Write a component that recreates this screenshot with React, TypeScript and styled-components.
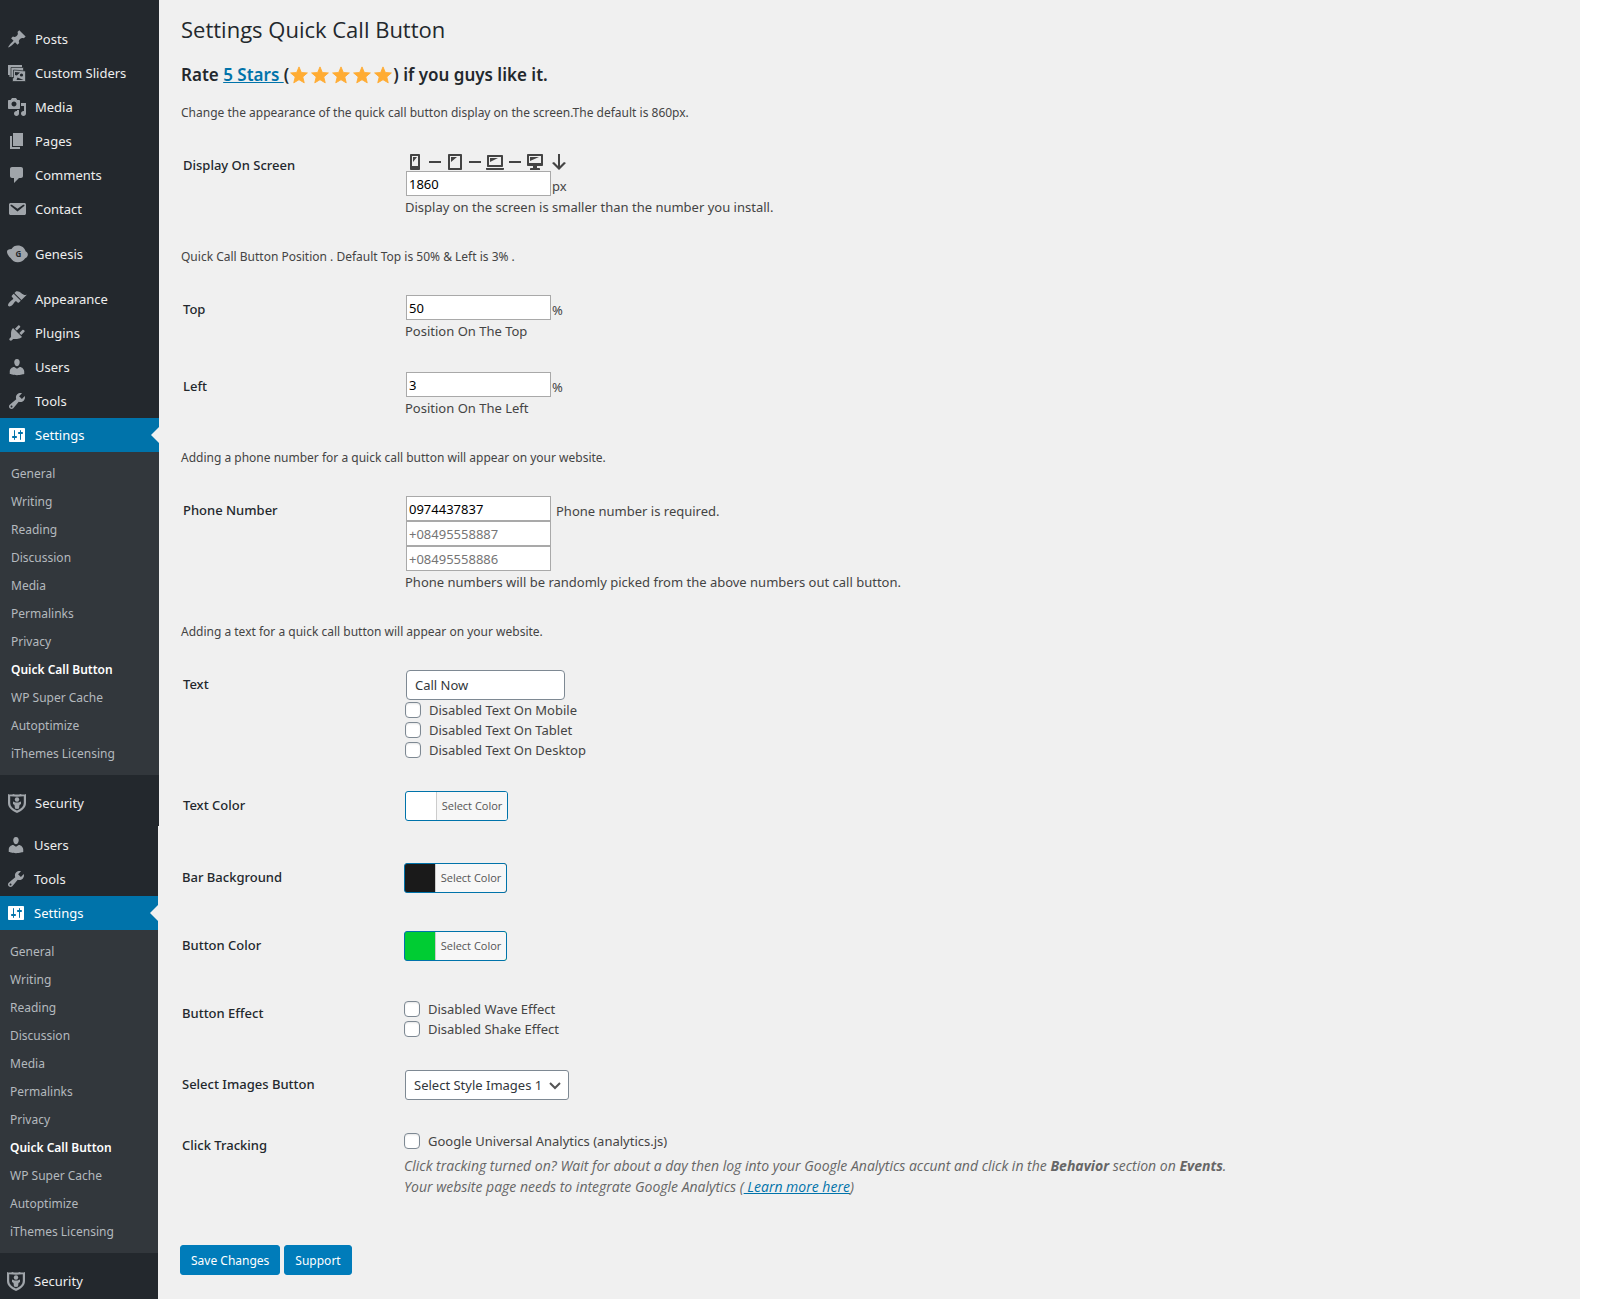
import React, { useState } from "react";
import styled, { createGlobalStyle, css } from "styled-components";

const color = {
  page: "#f0f0f0",
  menu: "#23282d",
  submenu: "#32373c",
  accent: "#0073aa",
  primary: "#007cba",
  heading: "#23282d",
  text: "#444444",
  muted: "#666666",
  border: "#7e8993",
  menuIcon: "#a0a5aa",
  menuText: "#eeeeee",
  submenuText: "#b4b9be",
};

const GlobalStyle = createGlobalStyle`
  *, *::before, *::after { box-sizing: border-box; }
  body {
    margin: 0;
    background: #ffffff;
    color: ${color.text};
    font-family: "Noto Sans", "Open Sans", sans-serif;
    font-size: 13px;
    line-height: 20px;
  }
  input, select, button { font-family: inherit; margin: 0; }
`;

const Page = styled.div`
  display: flex;
  margin: 0 20px 15px 0;
  background: ${color.page};
`;

const Sidebar = styled.aside`
  flex: 0 0 159px;
  overflow: hidden;
`;

const MenuBlock = styled.nav<{ $lower?: boolean }>`
  background: ${color.menu};
  padding: ${(p) => (p.$lower ? "2px 0 1px" : "22px 0 6px")};
  margin-left: ${(p) => (p.$lower ? "-1px" : "0")};
  width: 159px;
`;

const MenuList = styled.ul`
  list-style: none;
  margin: 0;
  padding: 0;
`;

const MenuItem = styled.li<{ $spaced?: boolean }>`
  margin-top: ${(p) => (p.$spaced ? "11px" : "0")};
`;

const MenuLink = styled.a<{ $active?: boolean }>`
  position: relative;
  display: flex;
  align-items: center;
  height: 34px;
  font-size: 13px;
  color: ${color.menuText};
  text-decoration: none;

  svg {
    flex: none;
    width: 20px;
    height: 20px;
    margin: 0 8px 0 7px;
    fill: ${color.menuIcon};
    overflow: visible;
  }

  ${(p) =>
    p.$active &&
    css`
      background: ${color.accent};
      color: #ffffff;
      svg { fill: #ffffff; }
      &::after {
        content: "";
        position: absolute;
        right: 0;
        top: 9px;
        border: 8px solid transparent;
        border-left-width: 0;
        border-right-color: ${color.page};
      }
    `}
`;

const Submenu = styled.ul`
  list-style: none;
  margin: 0;
  padding: 8px 0 7px;
  background: ${color.submenu};
`;

const SubmenuLink = styled.a<{ $current?: boolean }>`
  display: block;
  padding: 4px 11px;
  font-size: 12px;
  line-height: 20px;
  text-decoration: none;
  color: ${(p) => (p.$current ? "#ffffff" : color.submenuText)};
  font-weight: ${(p) => (p.$current ? 600 : 400)};
`;

const Main = styled.main`
  flex: 1;
  min-width: 0;
  padding: 14px 20px 24px 22px;
`;

const Title = styled.h1`
  margin: 0;
  font-family: "Open Sans", "Noto Sans", sans-serif;
  font-size: 22px;
  line-height: 30px;
  font-weight: 400;
  color: ${color.heading};
`;

const RateLine = styled.h2`
  display: flex;
  align-items: center;
  margin: 19px 0 16px;
  font-size: 17px;
  line-height: 24px;
  font-weight: 600;
  color: ${color.heading};
  white-space: pre;
`;

const Stars = styled.span`
  display: flex;
  gap: 3px;
  padding: 0 1px;
  svg { width: 18px; height: 18px; fill: #ffac33; }
`;

const Link = styled.a`
  color: ${color.accent};
  text-decoration: underline;
`;

const Intro = styled.p`
  margin: 29px 0 28px;
  font-size: 12px;
  line-height: 20px;

  ${RateLine} + & { margin-top: 0; }
`;

const Rows = styled.div<{ $wide?: boolean; $lower?: boolean }>`
  display: flex;
  flex-direction: column;
  gap: ${(p) => (p.$wide ? "31px" : "30px")};
  margin: ${(p) => (p.$lower ? "35px 0 0 -1px" : "0")};
`;

const Row = styled.div<{ $swatch?: boolean }>`
  display: grid;
  grid-template-columns: 222px minmax(0, 1fr);
  padding: 0 0 ${(p) => (p.$swatch ? "7px" : "0")} 2px;
`;

const rowLabel = css`
  padding-top: 4px;
  font-size: 13px;
  line-height: 20px;
  font-weight: 500;
  color: ${color.heading};
`;

const RowLabel = styled.label`
  ${rowLabel}
`;

const RowName = styled.span`
  ${rowLabel}
`;

const Control = styled.div`
  display: flex;
  flex-direction: column;
  align-items: flex-start;
  font-size: 13px;
`;

const DeviceIcons = styled.div`
  display: flex;
  height: 20px;
  padding-top: 1px;
  svg { width: 20px; height: 20px; fill: ${color.text}; }
  svg:last-child { margin-left: 4px; }
`;

const Line = styled.div`
  display: flex;
  gap: 1px;
  padding-left: 1px;
`;

const Suffix = styled.span<{ $apart?: boolean }>`
  padding: 5px 0 0 ${(p) => (p.$apart ? "4px" : "0")};
  line-height: 20px;
  height: 25px;
`;

const SmallInput = styled.input`
  width: 145px;
  height: 25px;
  padding: 1px 2px;
  border: 1px solid #a9a9a9;
  background: #ffffff;
  color: #000000;
  font-size: 13px;
  outline: none;
  &::placeholder { color: #757575; }
`;

const TextInput = styled.input`
  width: 159px;
  height: 30px;
  padding: 0 8px;
  border: 1px solid ${color.border};
  border-radius: 4px;
  background: #ffffff;
  color: #32373c;
  font-size: 13px;
  outline: none;
`;

const Help = styled.p`
  margin: 0;
  line-height: 22px;
`;

const CheckLabel = styled.label`
  display: flex;
  align-items: center;
  gap: 8px;
  height: 20px;
`;

const Checkbox = styled.input.attrs({ type: "checkbox" })`
  appearance: none;
  width: 16px;
  height: 16px;
  border: 1px solid ${color.border};
  border-radius: 4px;
  background: #ffffff;
  box-shadow: inset 0 1px 2px rgba(0, 0, 0, 0.1);
  &:checked { background: ${color.accent}; }
`;

const ColorButton = styled.button<{ $color: string }>`
  display: flex;
  height: 30px;
  padding: 0;
  border: 1px solid ${color.accent};
  border-radius: 3px;
  background: ${(p) => p.$color};
  overflow: hidden;
  cursor: pointer;
`;

const ColorButtonText = styled.span`
  width: 71px;
  margin-left: 30px;
  border-left: 1px solid #cccccc;
  background: #f7f7f7;
  color: #555555;
  font-family: "Open Sans", "Noto Sans", sans-serif;
  font-size: 11px;
  line-height: 28px;
  text-align: center;
`;

const SelectBox = styled.div`
  position: relative;
  margin-left: 1px;
  svg {
    position: absolute;
    right: 7px;
    top: 8px;
    width: 14px;
    height: 14px;
    fill: none;
    stroke: #555555;
    stroke-width: 2;
    pointer-events: none;
  }
`;

const Select = styled.select`
  appearance: none;
  width: 164px;
  height: 30px;
  padding: 0 22px 0 8px;
  border: 1px solid ${color.border};
  border-radius: 3px;
  background: #ffffff;
  color: #32373c;
  font-size: 13px;
`;

const Description = styled.p`
  margin: 4px 0 0;
  font-family: "Open Sans", "Noto Sans", sans-serif;
  font-size: 14px;
  line-height: 21px;
  font-style: italic;
  color: ${color.muted};
`;

const Actions = styled.div`
  display: flex;
  gap: 4px;
  margin: 48px 0 0 -1px;
`;

const PrimaryButton = styled.button`
  height: 30px;
  padding: 0 10px;
  border: 1px solid ${color.primary};
  border-radius: 3px;
  background: ${color.primary};
  color: #ffffff;
  font-size: 12px;
  cursor: pointer;
`;

const icons: Record<string, React.ReactNode> = {
  post: <path d="M10.44 3.02l1.82-1.82 6.36 6.35-1.83 1.82c-1.05-.68-2.48-.57-3.41.36l-.75.75c-.92.93-1.04 2.35-.35 3.41l-1.83 1.82-2.41-2.41-2.8 2.79c-.42.42-3.38 2.71-3.8 2.29s1.86-3.39 2.28-3.81l2.79-2.79L4.1 9.36l1.83-1.82c1.05.69 2.48.57 3.4-.36l.75-.75c.93-.92 1.05-2.35.36-3.41z" />,
  sliders: (
    <>
      <path d="M1 2h14v3H4v9H2.500v-2H1z" />
      <path stroke={color.menu} strokeWidth="0.700" d="M4 4.500h12.500V16H6v-1.500H4z" />
      <path stroke={color.menu} strokeWidth="0.700" d="M6.500 7l12 1v10.500H5.500V15h1z" />
      <path fill={color.menu} d="M8 9l5 .4-3.200 3L8 12zM9.500 17l1-2.500 6 2.500z" />
      <circle cx="14.500" cy="12" r="1.600" fill={color.menu} />
    </>
  ),
  media: <path d="M13 11V4c0-.55-.45-1-1-1h-1.670L9 1H5L3.670 3H2c-.55 0-1 .45-1 1v7c0 .55.45 1 1 1h10c.55 0 1-.45 1-1zM7 4.500c1.380 0 2.500 1.120 2.500 2.500S8.380 9.500 7 9.500 4.500 8.380 4.500 7 5.620 4.500 7 4.500zM14 6h5v10.500c0 1.380-1.120 2.500-2.500 2.500S14 17.880 14 16.500s1.120-2.500 2.500-2.500c.17 0 .34.02.5.05V9h-3V6zM10 14.050V13h2v3.500c0 1.380-1.120 2.500-2.500 2.500S7 17.880 7 16.500 8.120 14 9.500 14c.17 0 .34.02.5.05z" />,
  page: <path d="M6 15V2h10v13H6zm-1 1h8v2H3V5h2v11z" />,
  comments: <path d="M5 2h9c1.100 0 2 .9 2 2v7c0 1.100-.9 2-2 2h-2l-5 5v-5H5c-1.100 0-2-.9-2-2V4c0-1.100.9-2 2-2z" />,
  email: <path d="M3.870 4h13.250C18.370 4 19 4.590 19 5.790v8.420c0 1.190-.63 1.790-1.880 1.790H3.870c-1.250 0-1.880-.6-1.880-1.790V5.790c0-1.200.63-1.790 1.880-1.790zm6.620 8.600l6.740-5.530c.24-.2.43-.66.13-1.070-.29-.41-.82-.42-1.170-.17l-5.700 3.860L4.800 5.830c-.35-.25-.88-.24-1.170.17-.3.41-.11.87.13 1.070z" />,
  genesis: (
    <>
      <path d="M4.500 5C6 2.500 8 1.500 10.800 1.500c4 0 6.700 2.300 8 6 1.500.8 2.200 2 2 3.500-.2 1.600-1.200 2.600-2.600 3.200-1.800 2.600-4.300 4.100-7.400 4.100-3 0-5.600-1.500-7.200-4.300C1.800 12.500.2 10 0 8c-.2-2 1.500-3 4.500-3z" />
      <text x="11.500" y="12.800" fontSize="8" fontWeight="700" textAnchor="middle" fill={color.menu}>G</text>
    </>
  ),
  appearance: <path d="M14.480 11.060L7.410 3.990l1.500-1.500c.5-.56 2.300-.47 3.510.32 1.210.8 1.430 1.280 2.910 2.100 1.180.64 2.450 1.260 4.450.85zm-.71.71L6.700 4.700 4.930 6.470c-.39.39-.39 1.020 0 1.410l1.060 1.060c.39.39.39 1.030 0 1.420-.6.6-1.430 1.110-2.210 1.690-.35.26-.7.53-1.010.84C1.430 14.230.4 16.080 1.400 17.070c.99 1 2.840-.03 4.180-1.360.31-.31.58-.66.85-1.020.57-.78 1.080-1.610 1.690-2.210.39-.39 1.020-.39 1.410 0l1.060 1.060c.39.39 1.020.39 1.410 0z" />,
  plugins: <path d="M13.110 4.360L9.870 7.600 8 5.730l3.240-3.240c.35-.34 1.050-.2 1.560.32.52.51.66 1.210.31 1.550zm-8 1.770l.91-1.120 9.010 9.010-1.190.84c-.71.71-2.630 1.160-3.820 1.160H6.140L4.900 17.260c-.59.59-1.540.59-2.120 0-.59-.58-.59-1.530 0-2.120l1.240-1.240v-3.880c0-1.130.4-3.190 1.090-3.890zm7.260 3.970l3.240-3.240c.34-.35 1.040-.21 1.550.31.52.51.66 1.210.31 1.550l-3.240 3.250z" />,
  users: <path d="M10 9.250c-2.270 0-2.730-3.440-2.730-3.440C7 4.020 7.820 2 9.970 2c2.160 0 2.980 2.020 2.710 3.810 0 0-.41 3.440-2.680 3.440zm0 2.570L12.720 10c2.390 0 4.520 2.330 4.520 4.530v2.490s-3.650 1.130-7.240 1.130c-3.650 0-7.240-1.130-7.240-1.130v-2.490c0-2.250 1.940-4.480 4.470-4.480z" />,
  tools: <path d="M16.680 9.770c-1.340 1.340-3.300 1.670-4.950.99l-5.410 6.520c-.99.99-2.590.99-3.580 0s-.99-2.590 0-3.570l6.520-5.420c-.68-1.650-.35-3.610.99-4.950 1.280-1.280 3.120-1.620 4.720-1.060l-2.890 2.890 2.820 2.820 2.860-2.870c.53 1.580.18 3.390-1.080 4.650zM3.810 16.210c.4.39 1.040.39 1.430 0 .4-.4.4-1.040 0-1.430-.39-.4-1.030-.4-1.430 0-.39.39-.39 1.030 0 1.430z" />,
  settings: <path d="M18 16V4c0-.55-.45-1-1-1H3c-.55 0-1 .45-1 1v12c0 .55.45 1 1 1h14c.55 0 1-.45 1-1zM8 11h1c.55 0 1 .45 1 1s-.45 1-1 1H8v1.500c0 .28-.22.5-.5.5s-.5-.22-.5-.5V13H6c-.55 0-1-.45-1-1s.45-1 1-1h1V5.500c0-.28.22-.5.5-.5s.5.22.5.5V11zm5-2h-1c-.55 0-1-.45-1-1s.45-1 1-1h1V5.500c0-.28.22-.5.5-.5s.5.22.5.5V7h1c.55 0 1 .45 1 1s-.45 1-1 1h-1v5.500c0 .28-.22.5-.5.5s-.5-.22-.5-.5V9z" />,
  security: (
    <>
      <path fillRule="evenodd" d="M1 1c2 1 4 .5 5.500 0 1.500.8 5.500.8 7 0C15 1.500 17 2 19 1v9c0 4-3 7.500-9 10-6-2.500-9-6-9-10zM3.200 3.200V10c0 3 2.300 5.500 6.800 7.600 4.500-2.100 6.800-4.600 6.800-7.600V3.200c-5 .6-8.600.6-13.600 0z" />
      <circle cx="10" cy="6.500" r="2.200" />
      <path d="M6 8.500l2.500 1h3l2.500-1v2.500l-1.500 1-.5 3.500L10 16l-2-.5-.5-3.500L6 11z" />
    </>
  ),
  smartphone: <path d="M6 2h8c.55 0 1 .45 1 1v14c0 .55-.45 1-1 1H6c-.55 0-1-.45-1-1V3c0-.55.45-1 1-1zm7 12V4H7v10h6zM8 5h4l-4 5V5z" />,
  tablet: <path d="M4 2h12c.55 0 1 .45 1 1v14c0 .55-.45 1-1 1H4c-.55 0-1-.45-1-1V3c0-.55.45-1 1-1zm11 14V4H5v12h10zM6 5h6l-6 5V5z" />,
  laptop: <path d="M3 3h14c.6 0 1 .4 1 1v10c0 .6-.4 1-1 1H3c-.6 0-1-.4-1-1V4c0-.6.4-1 1-1zm13 2H4v8h12V5zm-3 1H5v4zm6 11v-1H1v1c0 .6.5 1 1.100 1h15.800c.6 0 1.100-.4 1.100-1z" />,
  desktop: <path d="M3 2h14c.55 0 1 .45 1 1v10c0 .55-.45 1-1 1h-5v2h2c.55 0 1 .45 1 1v1H5v-1c0-.55.45-1 1-1h2v-2H3c-.55 0-1-.45-1-1V3c0-.55.45-1 1-1zm13 9V4H4v7h12zM5 5h9L5 9V5z" />,
  minus: <path d="M4 9h12v2H4V9z" />,
  arrowDown: <path d="M9 2h2v12l4-4 2 1-7 7-7-7 2-1 4 4V2z" />,
  star: <path strokeLinejoin="round" strokeWidth="1" stroke="#ffac33" d="M10 1l2.600 6.200 6.700.5-5.100 4.400 1.600 6.600L10 15.200l-5.800 3.500 1.600-6.600L.7 7.700l6.700-.5z" />,
};

const Icon = ({ name }: { name: string }) => (
  <svg viewBox="0 0 20 20" aria-hidden="true">
    {icons[name]}
  </svg>
);

type Entry = { icon: string; label: string; spaced?: boolean };

const upperMenu: Entry[] = [
  { icon: "post", label: "Posts" },
  { icon: "sliders", label: "Custom Sliders" },
  { icon: "media", label: "Media" },
  { icon: "page", label: "Pages" },
  { icon: "comments", label: "Comments" },
  { icon: "email", label: "Contact" },
  { icon: "genesis", label: "Genesis", spaced: true },
  { icon: "appearance", label: "Appearance", spaced: true },
  { icon: "plugins", label: "Plugins" },
  { icon: "users", label: "Users" },
  { icon: "tools", label: "Tools" },
  { icon: "settings", label: "Settings" },
  { icon: "security", label: "Security", spaced: true },
];

const lowerMenu = upperMenu.slice(9);

const settingsPages = [
  "General",
  "Writing",
  "Reading",
  "Discussion",
  "Media",
  "Permalinks",
  "Privacy",
  "Quick Call Button",
  "WP Super Cache",
  "Autoptimize",
  "iThemes Licensing",
];

const Menu = ({ entries, lower }: { entries: Entry[]; lower?: boolean }) => (
  <MenuBlock $lower={lower} aria-label={lower ? "More" : "Main"}>
    <MenuList>
      {entries.map(({ icon, label, spaced }) => (
        <MenuItem key={label} $spaced={spaced}>
          <MenuLink href="#" $active={label === "Settings"}>
            <Icon name={icon} />
            {label}
          </MenuLink>
          {label === "Settings" && (
            <Submenu>
              {settingsPages.map((page) => (
                <li key={page}>
                  <SubmenuLink href="#" $current={page === "Quick Call Button"}>
                    {page}
                  </SubmenuLink>
                </li>
              ))}
            </Submenu>
          )}
        </MenuItem>
      ))}
    </MenuList>
  </MenuBlock>
);

const Check = ({ children }: { children: React.ReactNode }) => (
  <CheckLabel>
    <Checkbox />
    {children}
  </CheckLabel>
);

const NumberRow = ({ id, label, value, help }: { id: string; label: string; value: string; help: string }) => (
  <Row>
    <RowLabel htmlFor={id}>{label}</RowLabel>
    <Control>
      <Line>
        <SmallInput id={id} defaultValue={value} />
        <Suffix>%</Suffix>
      </Line>
      <Help>{help}</Help>
    </Control>
  </Row>
);

const ColorRow = ({ id, label, value }: { id: string; label: string; value: string }) => (
  <Row $swatch>
    <RowLabel htmlFor={id}>{label}</RowLabel>
    <Control>
      <ColorButton id={id} type="button" $color={value}>
        <ColorButtonText>Select Color</ColorButtonText>
      </ColorButton>
    </Control>
  </Row>
);

const devices = ["smartphone", "minus", "tablet", "minus", "laptop", "minus", "desktop", "arrowDown"];

export default function App() {
  const [style, setStyle] = useState("1");

  return (
    <>
      <GlobalStyle />
      <Page>
        <Sidebar>
          <Menu entries={upperMenu} />
          <Menu entries={lowerMenu} lower />
        </Sidebar>
        <Main>
          <Title>Settings Quick Call Button</Title>
          <RateLine>
            Rate <Link href="#">5 Stars </Link>(
            <Stars>
              {[1, 2, 3, 4, 5].map((n) => (
                <Icon key={n} name="star" />
              ))}
            </Stars>
            ) if you guys like it.
          </RateLine>
          <Intro>Change the appearance of the quick call button display on the screen.The default is 860px.</Intro>
          <form onSubmit={(e) => e.preventDefault()}>
            <Rows>
              <Row>
                <RowLabel htmlFor="screen">Display On Screen</RowLabel>
                <Control>
                  <DeviceIcons>
                    {devices.map((name, i) => (
                      <Icon key={i} name={name} />
                    ))}
                  </DeviceIcons>
                  <Line>
                    <SmallInput id="screen" defaultValue="1860" />
                    <Suffix>px</Suffix>
                  </Line>
                  <Help>Display on the screen is smaller than the number you install.</Help>
                </Control>
              </Row>
            </Rows>
            <Intro>Quick Call Button Position . Default Top is 50% &amp; Left is 3% .</Intro>
            <Rows>
              <NumberRow id="top" label="Top" value="50" help="Position On The Top" />
              <NumberRow id="left" label="Left" value="3" help="Position On The Left" />
            </Rows>
            <Intro>Adding a phone number for a quick call button will appear on your website.</Intro>
            <Rows>
              <Row>
                <RowLabel htmlFor="phone">Phone Number</RowLabel>
                <Control>
                  <Line>
                    <SmallInput id="phone" defaultValue="0974437837" />
                    <Suffix $apart>Phone number is required.</Suffix>
                  </Line>
                  <Line>
                    <SmallInput aria-label="Second phone number" placeholder="+08495558887" />
                  </Line>
                  <Line>
                    <SmallInput aria-label="Third phone number" placeholder="+08495558886" />
                  </Line>
                  <Help>Phone numbers will be randomly picked from the above numbers out call button.</Help>
                </Control>
              </Row>
            </Rows>
            <Intro>Adding a text for a quick call button will appear on your website.</Intro>
            <Rows $wide>
              <Row>
                <RowLabel htmlFor="text">Text</RowLabel>
                <Control>
                  <Line>
                    <TextInput id="text" defaultValue="Call Now" />
                  </Line>
                  <Check>Disabled Text On Mobile</Check>
                  <Check>Disabled Text On Tablet</Check>
                  <Check>Disabled Text On Desktop</Check>
                </Control>
              </Row>
              <ColorRow id="text-color" label="Text Color" value="#ffffff" />
            </Rows>
            <Rows $wide $lower>
              <ColorRow id="bar-color" label="Bar Background" value="#1a1a1a" />
              <ColorRow id="button-color" label="Button Color" value="#00cc33" />
              <Row>
                <RowName>Button Effect</RowName>
                <Control>
                  <Check>Disabled Wave Effect</Check>
                  <Check>Disabled Shake Effect</Check>
                </Control>
              </Row>
              <Row>
                <RowLabel htmlFor="image">Select Images Button</RowLabel>
                <Control>
                  <SelectBox>
                    <Select id="image" value={style} onChange={(e) => setStyle(e.target.value)}>
                      <option value="1">Select Style Images 1</option>
                      <option value="2">Select Style Images 2</option>
                    </Select>
                    <svg viewBox="0 0 14 14" aria-hidden="true">
                      <path d="M2 5l5 5 5-5" />
                    </svg>
                  </SelectBox>
                </Control>
              </Row>
              <Row>
                <RowName>Click Tracking</RowName>
                <Control>
                  <Check>Google Universal Analytics (analytics.js)</Check>
                  <Description>
                    Click tracking turned on? Wait for about a day then log into your Google Analytics accunt and
                    click in the <strong>Behavior</strong> section on <strong>Events</strong>.
                    <br />
                    Your website page needs to integrate Google Analytics (<Link href="#">&nbsp;Learn more here</Link>)
                  </Description>
                </Control>
              </Row>
            </Rows>
            <Actions>
              <PrimaryButton type="submit">Save Changes</PrimaryButton>
              <PrimaryButton type="button">Support</PrimaryButton>
            </Actions>
          </form>
        </Main>
      </Page>
    </>
  );
}
